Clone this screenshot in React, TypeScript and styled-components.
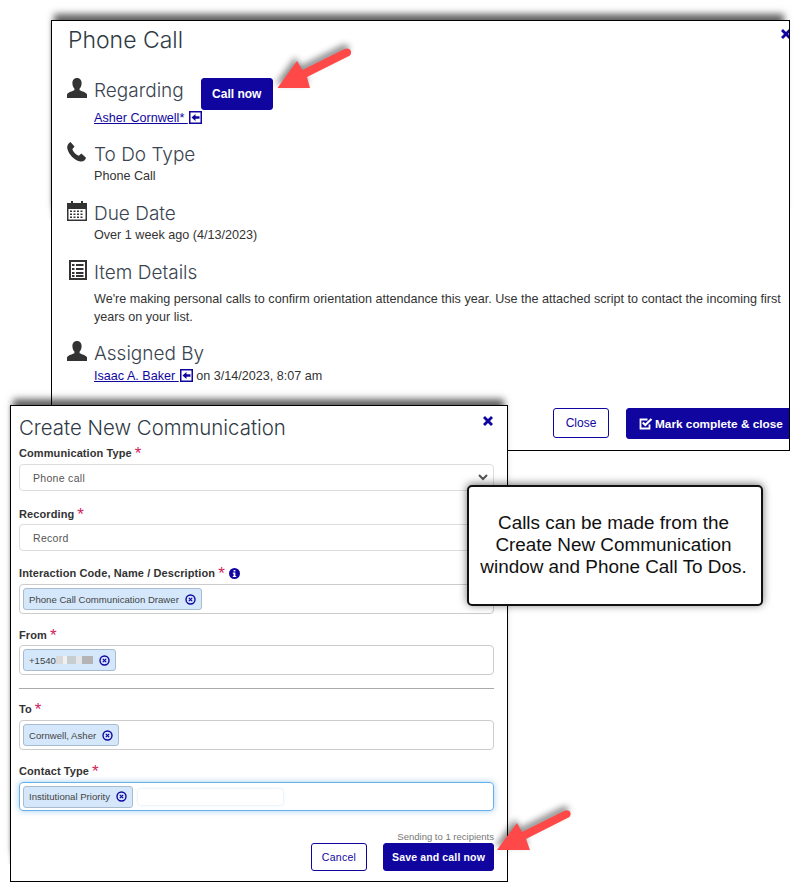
import React from 'react';
import styled, {createGlobalStyle} from 'styled-components';

const NAVY = '#10069f';

const GlobalStyle = createGlobalStyle`
  html, body {
    margin: 0;
    padding: 0;
    background: #fff;
  }
  * {
    box-sizing: border-box;
  }
`;

const Canvas = styled.div`
  position: relative;
  width: 799px;
  height: 882px;
  overflow: hidden;
  background: #fff;
  font-family: 'Liberation Sans', Arial, sans-serif;
  color: #333;
`;

// Both dialogs are pasted screenshots on a free canvas
const Window = styled.div<{$x: number; $y: number; $w: number; $h: number}>`
  position: absolute;
  left: ${p => p.$x}px;
  top: ${p => p.$y}px;
  width: ${p => p.$w}px;
  height: ${p => p.$h}px;
  background: #fff;
  border: 1.5px solid #000;
  overflow: hidden;
`;

const ShadowTop = styled.div<{$x: number; $y: number; $w: number; $h: number}>`
  position: absolute;
  left: ${p => p.$x}px;
  top: ${p => p.$y}px;
  width: ${p => p.$w}px;
  height: ${p => p.$h}px;
  box-shadow: 0 -9px 7px -3px rgba(0, 0, 0, 0.62), -2px 0 2px -1px rgba(0, 0, 0, 0.12);
`;

const CloseX = styled.svg<{$x: number; $y: number}>`
  position: absolute;
  left: ${p => p.$x}px;
  top: ${p => p.$y}px;
  width: 10px;
  height: 10px;
  fill: ${NAVY};
`;

const WindowTitle = styled.h1<{$size: number}>`
  margin: 0;
  font-family: Inter, sans-serif;
  font-weight: 300;
  font-size: ${p => p.$size}px;
  line-height: 36px;
  color: #2f3a45;
`;

const PhoneBody = styled.div`
  padding: 1px 0 0 16px;
`;

const Section = styled.section<{$gap?: number}>`
  margin-top: ${p => p.$gap ?? 16}px;
  display: grid;
  grid-template-columns: 26px 1fr;
`;

const SectionIcon = styled.svg`
  width: 20px;
  height: 20px;
  margin-left: -1px;
  fill: #333;
`;

const HeadRow = styled.div`
  display: flex;
  align-items: flex-start;
  gap: 17px;
  height: 30px;
`;

const SectionHeading = styled.h2`
  margin: 0 0 -1px;
  padding-top: 1px;
  font-family: Inter, sans-serif;
  font-weight: 300;
  font-size: 19px;
  line-height: 24px;
  color: #3a4450;
`;

const SectionText = styled.div<{$top?: number}>`
  grid-column: 2;
  margin-top: ${p => p.$top ?? 1}px;
  padding-right: 4px;
  font-size: 12.6px;
  line-height: 18px;
`;

const PersonLink = styled.a`
  color: ${NAVY};
  text-decoration: underline;
`;

const JumpIcon = styled.svg`
  width: 13px;
  height: 13px;
  margin-left: 1px;
  vertical-align: -2px;
`;

const Primary = styled.button`
  border: 1px solid ${NAVY};
  border-radius: 3px;
  background: ${NAVY};
  color: #fff;
  font-family: inherit;
  font-weight: bold;
  font-size: 12px;
`;

const Outline = styled.button`
  border: 1px solid ${NAVY};
  border-radius: 3px;
  background: #fff;
  color: ${NAVY};
  font-family: inherit;
  font-size: 12px;
`;

const CallNow = styled(Primary)`
  flex: none;
  width: 72px;
  height: 32px;
  padding: 0;
`;

const PhoneFooter = styled.div`
  display: flex;
  justify-content: flex-end;
  gap: 17px;
  margin-top: 23px;
  margin-right: -6px;
`;

const CloseButton = styled(Outline)`
  width: 56px;
  height: 30px;
  padding: 0;
`;

const MarkButton = styled(Primary)`
  display: flex;
  align-items: center;
  gap: 2px;
  width: 169px;
  height: 31px;
  padding: 0 0 0 12px;
  font-size: 11.8px;
  white-space: nowrap;
`;

const CheckIcon = styled.svg`
  width: 14px;
  height: 13px;
`;

const FormBody = styled.div`
  padding: 4px 13px 0 8px;
`;

const Group = styled.div<{$gap?: number}>`
  margin-bottom: ${p => p.$gap ?? 14}px;
`;

const Label = styled.label<{$gap?: number}>`
  display: flex;
  align-items: center;
  gap: 3px;
  height: 14px;
  margin-bottom: ${p => p.$gap ?? 4}px;
  font-size: 11px;
  font-weight: bold;
  letter-spacing: 0.1px;
  color: #333;
`;

const Star = styled.span`
  font-size: 17px;
  font-weight: normal;
  color: #d2235a;
  line-height: 14px;
  transform: translateY(1px);
`;

const InfoIcon = styled.svg`
  width: 11px;
  height: 11px;
  margin-left: 1px;
  fill: ${NAVY};
`;

const SelectBox = styled.div`
  display: flex;
  align-items: center;
  justify-content: space-between;
  height: 27px;
  padding: 0 5px 0 13px;
  border: 1px solid #ddd;
  border-radius: 4px;
  font-size: 10.5px;
  letter-spacing: 0.3px;
  color: #555;
`;

const Chevron = styled.svg`
  width: 10px;
  height: 7px;
  fill: none;
  stroke: #555;
  stroke-width: 2;
`;

const TagBox = styled.div<{$focus?: boolean}>`
  display: flex;
  align-items: center;
  gap: 5px;
  height: ${p => (p.$focus ? 29 : 30)}px;
  padding: 0 3px;
  border: 1px solid ${p => (p.$focus ? '#66afe9' : '#ccc')};
  border-radius: 4px;
  box-shadow: ${p => (p.$focus ? '0 0 6px rgba(102, 175, 233, 0.6)' : 'none')};
`;

const Tag = styled.span`
  display: inline-flex;
  align-items: center;
  gap: 6px;
  height: 22px;
  padding: 0 5px;
  border: 1px solid #a9bccf;
  border-radius: 3px;
  background: #d5e8fb;
  font-size: 9.6px;
  color: #444;
  white-space: nowrap;
`;

const TagX = styled.svg`
  width: 11px;
  height: 11px;
  flex: none;
`;

const Blurred = styled.span`
  display: inline-block;
  width: 37px;
  height: 8px;
  margin-left: -6px;
  filter: blur(0.7px);
  background: linear-gradient(90deg, #d8d8d8 0 20%, #eef0f2 20% 30%, #c8cdd0 30% 55%, #e2e6ea 55% 70%, #b4b4b4 70% 100%);
`;

const TagInput = styled.span`
  width: 145px;
  height: 16px;
  border-radius: 3px;
  background: #fff;
  box-shadow: 0 0 3px rgba(102, 175, 233, 0.35);
`;

const Rule = styled.hr`
  height: 0;
  margin: 13px 0 13px;
  border: 0;
  border-top: 1px solid #aaa;
`;

const Sending = styled.div`
  margin-top: 20px;
  text-align: right;
  font-size: 9.5px;
  line-height: 12px;
  color: #777;
`;

const FormFooter = styled.div`
  display: flex;
  justify-content: flex-end;
  gap: 16px;
`;

const CancelButton = styled(Outline)`
  width: 56px;
  height: 28px;
  padding: 0;
  font-size: 10.5px;
  letter-spacing: 0.3px;
`;

const SaveButton = styled(Primary)`
  width: 111px;
  height: 28px;
  padding: 0;
  font-size: 10.5px;
  letter-spacing: 0.15px;
`;

const Callout = styled.div`
  position: absolute;
  left: 467px;
  top: 485px;
  width: 296px;
  height: 121px;
  display: flex;
  align-items: center;
  justify-content: center;
  padding: 0 3px 1px 0;
  border: 2px solid #111;
  border-radius: 5px;
  background: #fff;
  box-shadow: 0 -1px 8px rgba(0, 0, 0, 0.55);
  font-size: 18.9px;
  line-height: 22px;
  text-align: center;
  white-space: nowrap;
  color: #111;
`;

const Arrow = styled.svg<{$x: number; $y: number}>`
  position: absolute;
  left: ${p => p.$x}px;
  top: ${p => p.$y}px;
  width: 90px;
  height: 60px;
  overflow: visible;
  filter: drop-shadow(-2px -4px 3px rgba(0, 0, 0, 0.45));
`;

const UserGlyph = () => (
  <SectionIcon viewBox="0 0 20 20">
    <path d="M10 0c3 0 4.600 2.200 4.600 5.200 0 2.400-1 4.400-2 5.400v1.600c2 1 6.200 1.900 7.400 4V20H0v-3.800c1.200-2.100 5.400-3 7.400-4v-1.600c-1-1-2-3-2-5.400C5.400 2.200 7 0 10 0z" />
  </SectionIcon>
);

const PhoneGlyph = () => (
  <SectionIcon viewBox="0 0 20 20">
    <path d="M3.500 0 7.500 4.500 5.300 7.200c.9 2.800 3.700 5.600 6.500 6.600l2.600-2.300 4.600 4.200c-.5 2.400-2.900 4.300-5.500 3.800C7.500 18.500 1.700 12.500.3 6.500-.2 3.800 1.200 1 3.500 0z" />
  </SectionIcon>
);

const CalendarGlyph = () => (
  <SectionIcon viewBox="0 0 20 20">
    <path fillRule="evenodd" d="M4 0h2v2h8V0h2v2h4v18H0V2h4zM1.500 8v10.500h17V8zM3 9.500h2v1.600H3zm3.500 0h2v1.600h-2zm3.500 0h2v1.600h-2zm3.500 0h2v1.600h-2zM3 12.500h2v1.600H3zm3.500 0h2v1.600h-2zm3.500 0h2v1.600h-2zm3.500 0h2v1.600h-2zM3 15.500h2v1.600H3zm3.500 0h2v1.600h-2zm3.500 0h2v1.600h-2zm3.500 0h2v1.600h-2z" />
  </SectionIcon>
);

const DetailsGlyph = () => (
  <SectionIcon viewBox="0 0 20 20">
    <path fillRule="evenodd" d="M2 0h18v20H2zm2 2v16h14V2zm1 2h2.500v2H5zm4 0h7.500v2H9zM5 8h2.500v2H5zm4 0h7.500v2H9zm-4 4h2.500v2H5zm4 0h7.500v2H9zm-4 3h2.500v2H5zm4 0h7.500v2H9z" />
  </SectionIcon>
);

const Jump = () => (
  <JumpIcon viewBox="0 0 13 13">
    <rect x="0.75" y="0.75" width="11.5" height="11.500" fill="none" stroke={NAVY} strokeWidth="1.500" />
    <path d="M2.500 6.500 6.500 3v2.300h4v2.400h-4V10z" fill={NAVY} />
  </JumpIcon>
);

const XGlyph = ({x, y}: {x: number; y: number}) => (
  <CloseX $x={x} $y={y} viewBox="0 0 10 10">
    <path d="M2 0 5 3 8 0l2 2-3 3 3 3-2 2-3-3-3 3-2-2 3-3-3-3z" />
  </CloseX>
);

const RemoveTag = () => (
  <TagX viewBox="0 0 11 11">
    <circle cx="5.500" cy="5.500" r="4.500" fill="none" stroke={NAVY} strokeWidth="1.400" />
    <path d="M3.800 3.800l3.400 3.400M7.200 3.800 3.800 7.200" stroke={NAVY} strokeWidth="1.200" />
  </TagX>
);

const Required = ({children, gap}: {children: React.ReactNode; gap?: number}) => (
  <Label $gap={gap}>
    {children}
    <Star>*</Star>
  </Label>
);

export default function App() {
  return (
    <Canvas>
      <GlobalStyle />
      <ShadowTop $x={51} $y={20} $w={736} $h={200} />
      <Window $x={51} $y={20} $w={739} $h={431}>
        <XGlyph x={729} y={8} />
        <PhoneBody>
          <WindowTitle $size={23}>Phone Call</WindowTitle>
          <Section $gap={20}>
            <UserGlyph />
            <HeadRow>
              <SectionHeading>Regarding</SectionHeading>
              <CallNow>Call now</CallNow>
            </HeadRow>
            <SectionText>
              <PersonLink>Asher Cornwell* </PersonLink>
              <Jump />
            </SectionText>
          </Section>
          <Section $gap={15}>
            <PhoneGlyph />
            <SectionHeading>To Do Type</SectionHeading>
            <SectionText>Phone Call</SectionText>
          </Section>
          <Section>
            <CalendarGlyph />
            <SectionHeading>Due Date</SectionHeading>
            <SectionText>Over 1 week ago (4/13/2023)</SectionText>
          </Section>
          <Section>
            <DetailsGlyph />
            <SectionHeading>Item Details</SectionHeading>
            <SectionText $top={6}>
              We're making personal calls to confirm orientation attendance this year. Use the attached script to contact the incoming first years on your list.
            </SectionText>
          </Section>
          <Section $gap={15}>
            <UserGlyph />
            <SectionHeading>Assigned By</SectionHeading>
            <SectionText $top={2}>
              <PersonLink>Isaac A. Baker </PersonLink>
              <Jump /> on 3/14/2023, 8:07 am
            </SectionText>
          </Section>
          <PhoneFooter>
            <CloseButton>Close</CloseButton>
            <MarkButton>
              <CheckIcon viewBox="0 0 14 13">
                <path d="M10.500 7.500V11.500H1.500V2.500h7" fill="none" stroke="#fff" strokeWidth="1.800" />
                <path d="M3.800 5.500 6.300 8 12.500 2" fill="none" stroke="#fff" strokeWidth="2.200" />
              </CheckIcon>
              Mark complete &amp; close
            </MarkButton>
          </PhoneFooter>
        </PhoneBody>
      </Window>

      <ShadowTop $x={10} $y={405} $w={497} $h={460} />
      <Window $x={10} $y={405} $w={498} $h={477}>
        <XGlyph x={472} y={10} />
        <FormBody>
          <WindowTitle $size={20.4}>Create New Communication</WindowTitle>
          <Group $gap={16}>
            <Required>Communication Type</Required>
            <SelectBox>
              Phone call
              <Chevron viewBox="0 0 10 7">
                <path d="M1 1l4 4 4-4" />
              </Chevron>
            </SelectBox>
          </Group>
          <Group $gap={15}>
            <Required gap={3}>Recording</Required>
            <SelectBox>Record</SelectBox>
          </Group>
          <Group>
            <Label>
              Interaction Code, Name / Description
              <Star>*</Star>
              <InfoIcon viewBox="0 0 11 11">
                <path fillRule="evenodd" d="M5.500 0a5.500 5.500 0 1 1 0 11 5.500 5.500 0 0 1 0-11zM4.600 2v1.600h1.800V2zM3.800 4.600v1.100h.8v2.200h-.8V9h3.400V7.900h-.8V4.600z" />
              </InfoIcon>
            </Label>
            <TagBox>
              <Tag>
                Phone Call Communication Drawer
                <RemoveTag />
              </Tag>
            </TagBox>
          </Group>
          <Group $gap={0}>
            <Required gap={3}>From</Required>
            <TagBox>
              <Tag>
                +1540
                <Blurred />
                <RemoveTag />
              </Tag>
            </TagBox>
          </Group>
          <Rule />
          <Group>
            <Required>To</Required>
            <TagBox>
              <Tag>
                Cornwell, Asher
                <RemoveTag />
              </Tag>
            </TagBox>
          </Group>
          <Group $gap={0}>
            <Required>Contact Type</Required>
            <TagBox $focus>
              <Tag>
                Institutional Priority
                <RemoveTag />
              </Tag>
              <TagInput />
            </TagBox>
          </Group>
          <Sending>Sending to 1 recipients</Sending>
          <FormFooter>
            <CancelButton>Cancel</CancelButton>
            <SaveButton>Save and call now</SaveButton>
          </FormFooter>
        </FormBody>
      </Window>

      <Callout>
        <div>
          Calls can be made from the
          <br />
          Create New Communication
          <br />
          window and Phone Call To Dos.
        </div>
      </Callout>

      <Arrow $x={270} $y={45} viewBox="0 0 90 60">
        <path d="M7.500 43 27 16l5.500 9 42-21c3-1.500 6 0 6.500 2.500.4 2-.5 3.800-2.500 4.800L37 32l3 11z" fill="#ff4848" />
      </Arrow>
      <Arrow $x={490} $y={805} viewBox="0 0 90 60">
        <path d="M7 45 27 18l5 9 42-21c3-1.500 6-.5 6.500 2 .4 2-.5 3.800-2.500 4.800L36 34l4 11z" fill="#ff4848" />
      </Arrow>
    </Canvas>
  );
}
